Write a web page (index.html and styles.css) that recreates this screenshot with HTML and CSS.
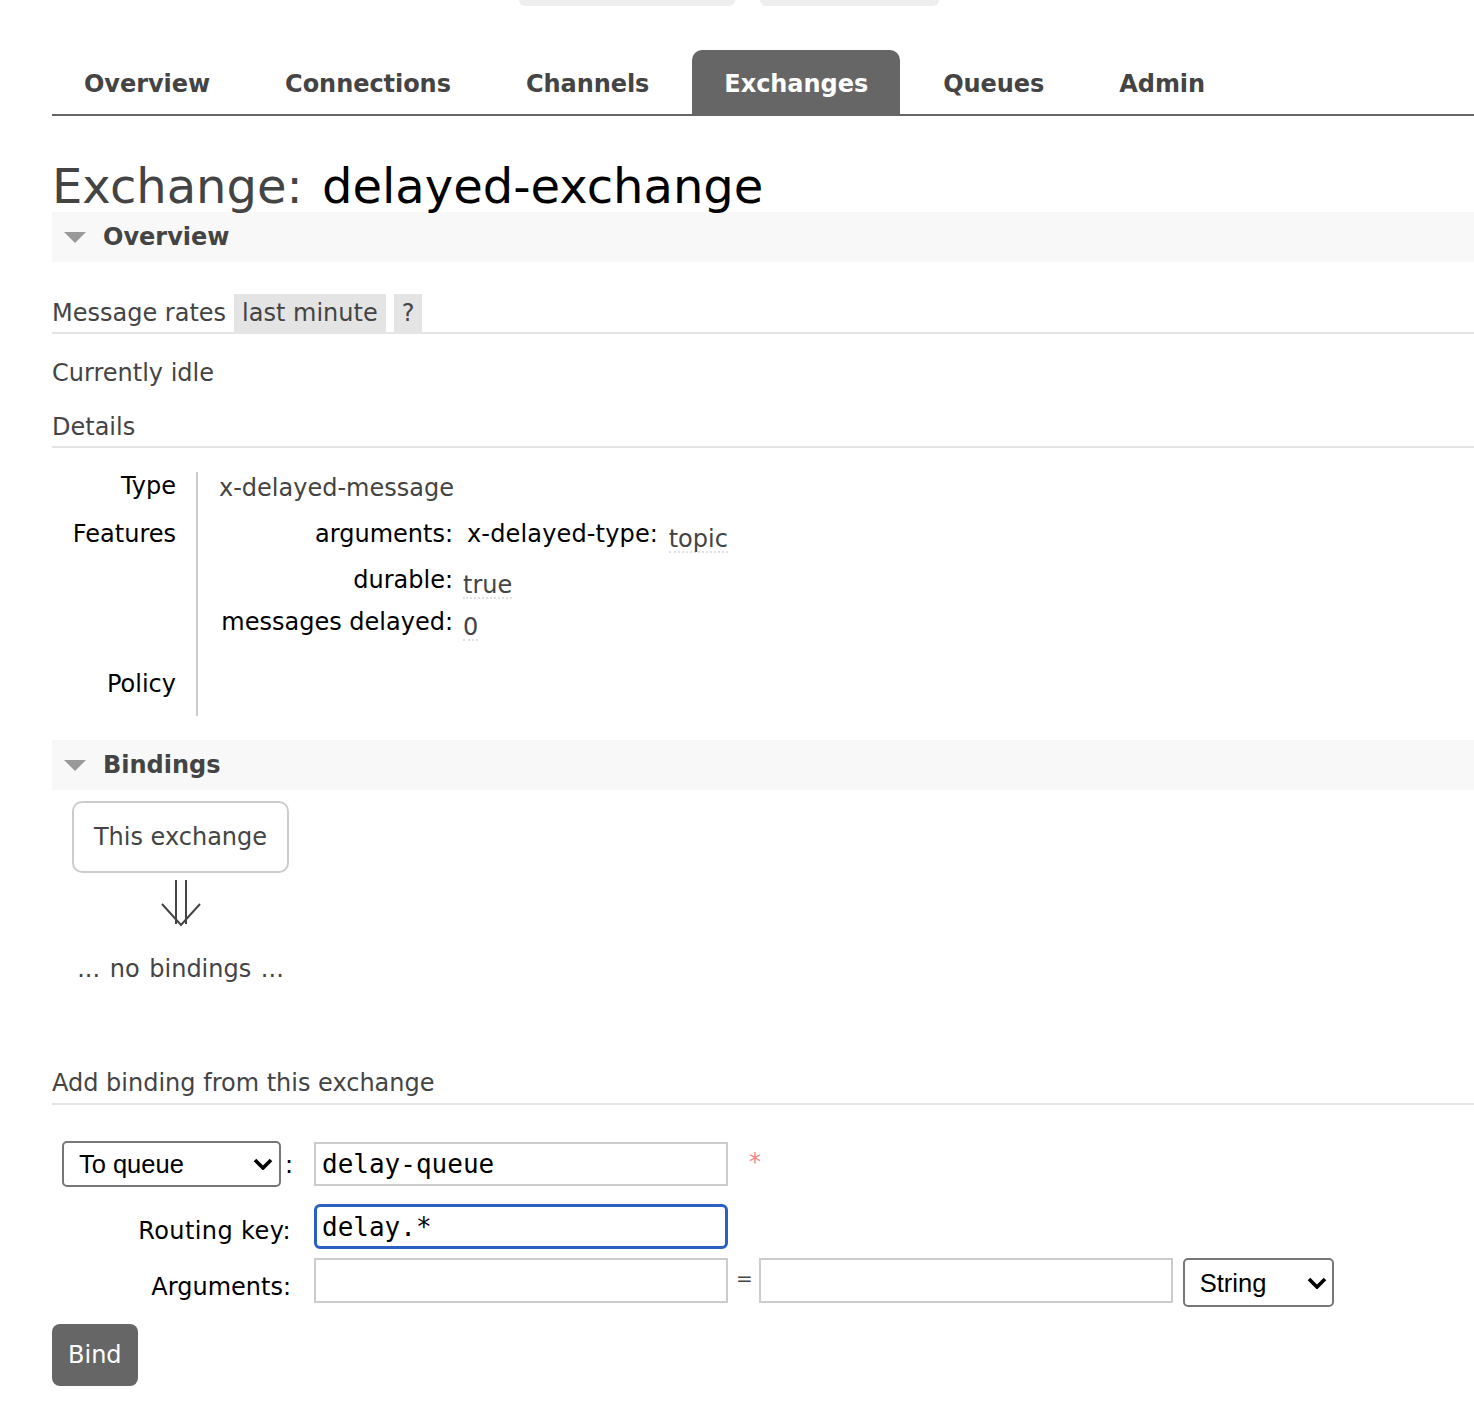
FILE: index.html
```html
<!DOCTYPE html>
<html lang="en">
<head>
<meta charset="utf-8">
<title>Exchange: delayed-exchange</title>
<link rel="stylesheet" href="styles.css">
</head>
<body>
<div class="topbar">
  <span class="pill pill-a"></span>
  <span class="pill pill-b"></span>
</div>
<ul class="tabs">
  <li class="tab">Overview</li>
  <li class="tab">Connections</li>
  <li class="tab">Channels</li>
  <li class="tab active">Exchanges</li>
  <li class="tab">Queues</li>
  <li class="tab">Admin</li>
</ul>
<main class="main">
  <h1 class="title"><span class="title-label">Exchange:</span> <span class="title-name">delayed-exchange</span></h1>

  <div class="section-h"><span class="tri"></span>Overview</div>

  <div class="rates">
    <span>Message rates</span>
    <span class="chip chip-first">last minute</span>
    <span class="chip">?</span>
  </div>
  <p class="idle">Currently idle</p>
  <h3 class="sub">Details</h3>

  <div class="details">
    <div class="dlabel row-type">Type</div>
    <div class="dvalue row-type"><span class="type-val">x-delayed-message</span></div>
    <div class="dlabel row-feat">Features</div>
    <div class="dvalue row-feat">
      <div class="feat">
        <div class="fkey fk1">arguments:</div>
        <div class="fval fk1"><span class="argkey">x-delayed-type:</span> <span class="v v-arg">topic</span></div>
        <div class="fkey fk2">durable:</div>
        <div class="fval fk2"><span class="v">true</span></div>
        <div class="fkey fk3">messages delayed:</div>
        <div class="fval fk3"><span class="v">0</span></div>
      </div>
    </div>
    <div class="dlabel row-pol">Policy</div>
    <div class="dvalue row-pol"></div>
  </div>

  <div class="section-h section-b"><span class="tri"></span>Bindings</div>

  <div class="flow">
    <div class="xbox">This exchange</div>
    <svg class="arrow" width="40" height="47" viewBox="0 0 40 47">
      <path d="M15 0 V44 M25 0 V44" stroke="#444" stroke-width="2" fill="none"/>
      <path d="M1 24 L20 45 L39 24" stroke="#444" stroke-width="2" fill="none"/>
    </svg>
    <p class="nob">... no bindings ...</p>
  </div>

  <h3 class="sub sub-add">Add binding from this exchange</h3>

  <form class="bform">
    <div class="frow r1">
      <div class="flabel">
        <span class="sel-wrap sel-dest">
          <select class="sel"><option>To queue</option><option>To exchange</option></select>
          <svg class="chev" width="20" height="12" viewBox="0 0 20 12"><path d="M2 2 L10 10 L18 2" stroke="#000" stroke-width="3.6" fill="none"/></svg>
        </span><span class="colon">:</span>
      </div>
      <div class="fctl">
        <input class="inp mono" type="text" value="delay-queue">
        <span class="req">*</span>
      </div>
    </div>
    <div class="frow r2">
      <div class="flabel lab">Routing key:</div>
      <div class="fctl">
        <input class="inp mono focus" type="text" value="delay.*">
      </div>
    </div>
    <div class="frow r3">
      <div class="flabel lab">Arguments:</div>
      <div class="fctl">
        <input class="inp" type="text">
        <span class="eq">=</span>
        <input class="inp" type="text">
        <span class="sel-wrap sel-type">
          <select class="sel"><option>String</option><option>Number</option><option>Boolean</option></select>
          <svg class="chev" width="20" height="12" viewBox="0 0 20 12"><path d="M2 2 L10 10 L18 2" stroke="#000" stroke-width="3.6" fill="none"/></svg>
        </span>
      </div>
    </div>
    <button class="bind" type="button">Bind</button>
  </form>
</main>
</body>
</html>
```
FILE: styles.css
```css
* { box-sizing: border-box; }
html, body { margin: 0; padding: 0; background: #fff; }
body {
  font-family: "DejaVu Sans", Verdana, sans-serif;
  font-size: 24px;
  line-height: 28px;
  color: #444;
  width: 1474px;
  overflow: hidden;
}

/* top strip */
.topbar { height: 6px; display: flex; gap: 25px; padding-left: 519px; overflow: hidden; }
.pill { display: block; height: 6px; background: #eee; border-radius: 0 0 10px 10px; }
.pill-a { width: 216px; }
.pill-b { width: 179px; }

/* tabs */
.tabs {
  list-style: none; margin: 44px 0 0 52px; padding: 0;
  display: flex; border-bottom: 2px solid #666; height: 66px;
}
.tab {
  height: 64px; padding: 21px 32px 0; margin-right: 11px;
  font-weight: bold; color: #444; line-height: 27px; letter-spacing: -0.05px;
  border-radius: 10px 10px 0 0;
}
.tab.active { background: #666; color: #fff; }

.main { padding-left: 52px; }

.title { margin: 44px 0 0; font-size: 48px; line-height: 52px; font-weight: normal; color: #444; }
.title-name { color: #000; margin-left: 4px; }

.section-h {
  height: 50px; line-height: 50px; background: #f8f8f8;
  font-weight: bold; color: #444; display: flex; align-items: center;
}
.tri {
  display: block; width: 0; height: 0;
  border-left: 11px solid transparent; border-right: 11px solid transparent;
  border-top: 11px solid #999; margin: 0 17px 0 12px;
}

.rates {
  margin-top: 32px; display: flex; height: 40px; line-height: 38px;
  border-bottom: 2px solid #e4e4e4; color: #444;
}
.chip { background: #e4e4e4; padding: 0 8px; margin-left: 8px; height: 38px; }
.chip-first { margin-left: 8px; }

.idle { margin: 25px 0 0; }
.sub {
  margin: 26px 0 0; font-size: 24px; font-weight: normal; line-height: 28px;
  padding-bottom: 5px; border-bottom: 2px solid #e4e4e4; color: #444;
}

.details {
  margin-top: 24px; display: grid; grid-template-columns: 144px 1fr;
  grid-template-rows: 48px 150px 46px;
}
.dlabel { text-align: right; padding-right: 20px; color: #000; }
.dvalue { border-left: 2px solid #ccc; padding-left: 21px; }
.type-val { display: inline-block; padding-top: 2px; color: #444; }

.feat { display: grid; grid-template-columns: 234px auto; grid-template-rows: 46px 42px 28px; }
.fkey { text-align: right; color: #000; }
.fval { padding-left: 10px; color: #000; }
.argkey { padding-left: 4px; letter-spacing: 0.15px; }
.v {
  display: inline-block; vertical-align: -5px; color: #444;
  line-height: 24px; border-bottom: 2px dotted #e0e0e0;
}
.v-arg { margin-left: 3px; }

.section-b { margin-top: 24px; }

.flow { width: 217px; margin-left: 20px; text-align: center; }
.xbox {
  margin-top: 11px; height: 72px; border: 2px solid #ccc; border-radius: 10px;
  line-height: 68px; color: #444;
}
.arrow { display: block; margin: 7px auto 0; }
.nob { margin: 28px -10px 0; color: #444; white-space: nowrap; word-spacing: 2px; }

.sub-add { margin-top: 86px; padding-bottom: 6px; }

.bform { margin-top: 36px; }
.frow { display: flex; align-items: flex-start; }
.flabel { width: 244px; text-align: right; padding-right: 5px; color: #000; }
.r1 .flabel { display: flex; justify-content: flex-end; align-items: center; padding-right: 3px; }
.fctl { margin-left: 18px; display: flex; align-items: flex-start; }

.sel-wrap { position: relative; display: inline-block; }
.sel {
  appearance: none; -webkit-appearance: none;
  border: 2px solid #777; border-radius: 5px; background: #fff;
  font-family: "Liberation Sans", Arial, sans-serif; font-size: 25.5px; color: #000;
  padding: 0 0 0 15px; margin: 0; display: block;
}
.sel-dest .sel { width: 219px; height: 46px; }
.sel-type .sel { width: 151px; height: 49px; }
.chev { position: absolute; right: 8px; top: 17px; pointer-events: none; }
.sel-type .chev { top: 19px; right: 7px; }
.colon { margin-left: 4px; color: #000; padding-top: 2px; }

.inp {
  width: 414px; height: 45px; border: 2px solid #ccc; border-radius: 0;
  margin: 0; padding: 0 6px; background: #fff; outline: none;
  font-family: "DejaVu Sans", sans-serif; font-size: 24px; color: #000;
}
.mono { font-family: "DejaVu Sans Mono", "Liberation Mono", monospace; font-size: 26px; }
.r1 .inp { margin-top: 1px; height: 44px; }
.focus { border: 3px solid #2b5fc4; border-radius: 6px; padding: 0 5px; }
.req { color: #f48686; margin-left: 21px; line-height: 43px; padding-top: 0; }

.r2 { margin-top: 17px; }
.r2 .lab { padding-top: 13px; letter-spacing: 0.4px; }
.r3 { margin-top: 9px; }
.r3 .lab { padding-top: 15px; }
.eq { font-size: 20px; color: #444; margin: 0 6px 0 8px; line-height: 40px; }
.sel-type { margin-left: 10px; }

.bind {
  display: block; margin-top: 17px; height: 62px; padding: 0 16px;
  background: #666; color: #fff; border: none; border-radius: 8px;
  font-family: "DejaVu Sans", sans-serif; font-size: 24px; line-height: 28px;
}
```
